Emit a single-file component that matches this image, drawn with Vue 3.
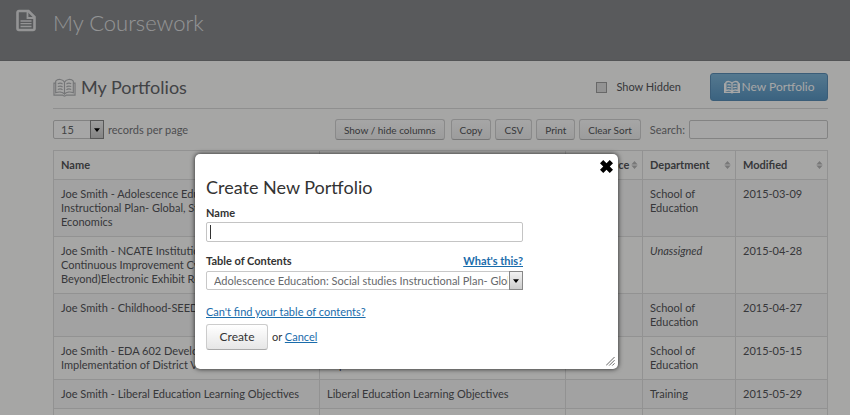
<script setup>
import { ref, onMounted } from 'vue'

const rows = [
  { name: 'Joe Smith - Adolescence Education:\nInstructional Plan- Global, Studies\nEconomics', toc: '', dept: 'School of Education', date: '2015-03-09' },
  { name: 'Joe Smith - NCATE Institutional\nContinuous Improvement Cycle\nBeyond)Electronic Exhibit Room', toc: '', dept: 'Unassigned', date: '2015-04-28' },
  { name: 'Joe Smith - Childhood-SEED\n ', toc: '', dept: 'School of Education', date: '2015-04-27' },
  { name: 'Joe Smith - EDA 602 Development\nImplementation of District Vision', toc: '\nImplementation of District Vision', dept: 'School of Education', date: '2015-05-15' },
  { name: 'Joe Smith - Liberal Education Learning Objectives', toc: 'Liberal Education Learning Objectives', dept: 'Training', date: '2015-05-29' },
  { name: '', toc: '', dept: '', date: '' },
]
const headings = ['Name', '', 'Conference', 'Department', 'Modified']
const tools = ['Copy', 'CSV', 'Print', 'Clear Sort']

const portfolioName = ref('')
const nameInput = ref(null)
onMounted(() => nameInput.value.focus())
</script>

<template>
  <div class="page">
    <header class="banner">
      <svg class="doc-icon" viewBox="0 0 20 22" aria-hidden="true">
        <path d="M3 1.500h9.500l6 6v11.500a1.500 1.500 0 0 1-1.500 1.500H3A1.500 1.500 0 0 1 1.500 19V3A1.500 1.500 0 0 1 3 1.500z" fill="none" stroke="currentColor" stroke-width="2.600" />
        <path d="M11.500 2.500v6h6.500" fill="none" stroke="currentColor" stroke-width="1.800" />
        <path d="M4.500 11.500h11M4.500 14.200h11M4.500 17h11" stroke="currentColor" stroke-width="1.300" />
      </svg>
      <h1>My Coursework</h1>
    </header>

    <main class="content">
      <div class="title-row">
        <svg class="book" viewBox="0 0 24 19" aria-hidden="true">
          <path d="M12 4C10.500 .5 5 .2 2.800 2.800V5H1v12.500h9q2 1.800 4 0h9V5h-1.800V2.800C19 .2 13.500 .5 12 4zM12 4V16.500M2.800 5v10c3-1.200 7.200-1 9.200 1.500 2-2.500 6.200-2.700 9.200-1.500V5M5 5.500c2-.8 3.800-.6 5 .5M5 8.500c2-.8 3.800-.6 5 .5M5 11.500c2-.8 3.800-.6 5 .5M19 5.500c-2-.8-3.800-.6-5 .5M19 8.500c-2-.8-3.800-.6-5 .5M19 11.500c-2-.8-3.800-.6-5 .5" />
        </svg>
        <h2>My Portfolios</h2>
        <label class="hidden-toggle"><input type="checkbox" />Show Hidden</label>
        <button class="new-btn" type="button">
          <svg class="book small" viewBox="0 0 24 19" aria-hidden="true">
            <path d="M12 4C10.500 .8 5 .5 2.800 2.800V5H1v12.500h9q2 1.500 4 0h9V5h-1.800V2.800C19 .5 13.500 .8 12 4zM12 4V16.500M2.800 5v10c3-1.200 7.200-1 9.200 1.500 2-2.500 6.200-2.700 9.200-1.500V5M5 6.500c2-.8 3.800-.6 5 .5M5 10.500c2-.8 3.800-.6 5 .5M19 6.500c-2-.8-3.800-.6-5 .5M19 10.500c-2-.8-3.800-.6-5 .5" />
          </svg>
          New Portfolio
        </button>
      </div>

      <div class="toolbar">
        <label class="records">
          <span class="picker">
            <select><option>15</option></select>
            <span class="drop"><svg viewBox="0 0 8 5" aria-hidden="true"><path d="M0 0h8L4 5z" /></svg></span>
          </span>
          records per page
        </label>
        <button class="tool columns" type="button">Show / hide columns</button>
        <button v-for="t in tools" :key="t" class="tool" type="button">{{ t }}</button>
        <label class="search">Search:<input type="text" /></label>
      </div>

      <table>
        <colgroup>
          <col class="c-name" /><col /><col class="c-aud" /><col class="c-dept" /><col class="c-date" />
        </colgroup>
        <thead>
          <tr>
            <th v-for="h in headings" :key="h">
              <span class="head">{{ h }}
                <svg viewBox="0 0 7 9" aria-hidden="true"><path d="M3.500 0L7 4H0zM0 5h7L3.500 9z" /></svg>
              </span>
            </th>
          </tr>
        </thead>
        <tbody>
          <tr v-for="(r, i) in rows" :key="i">
            <td>{{ r.name }}</td>
            <td>{{ r.toc }}</td>
            <td></td>
            <td :class="{ none: r.dept === 'Unassigned' }">{{ r.dept }}</td>
            <td>{{ r.date }}</td>
          </tr>
        </tbody>
      </table>
    </main>

    <div class="shade"></div>

    <form class="dialog" role="dialog" aria-labelledby="dlg-title" @submit.prevent>
      <button class="close" type="button" aria-label="Close">
        <svg viewBox="0 0 12 12"><path d="M3 0l3 3 3-3 3 3-3 3 3 3-3 3-3-3-3 3-3-3 3-3-3-3z" /></svg>
      </button>
      <h3 id="dlg-title">Create New Portfolio</h3>
      <div class="fields">
        <label class="field-label" for="pname">Name</label>
        <input id="pname" ref="nameInput" v-model="portfolioName" class="text" type="text" />
        <div class="label-row">
          <label class="field-label" for="toc">Table of Contents</label>
          <a class="bold" href="#">What's this?</a>
        </div>
        <span class="picker wide">
          <select id="toc"><option>Adolescence Education: Social studies Instructional Plan- Global</option></select>
          <span class="drop"><svg viewBox="0 0 8 5" aria-hidden="true"><path d="M0 0h8L4 5z" /></svg></span>
        </span>
      </div>
      <a class="find" href="#">Can't find your table of contents?</a>
      <div class="actions">
        <button class="create" type="submit">Create</button>
        <span>or <a href="#">Cancel</a></span>
      </div>
      <svg class="grip" viewBox="0 0 10 10" aria-hidden="true"><path d="M0 9.500L9.500 0M3.500 9.500l6-6M7 9.500L9.500 7" /></svg>
    </form>
  </div>
</template>

<style>
body {
  background: #a6a6a5;
  overflow: hidden;
}
</style>

<style scoped>
* {
  box-sizing: border-box;
}
.page {
  position: relative;
  height: 100vh;
  overflow: hidden;
  background: #fffffe;
  color: #55565a;
  font: 11px/14px Lato, sans-serif;
}
h1,
h2,
h3 {
  margin: 0;
  font-weight: 400;
}
button,
input,
select {
  font: inherit;
  color: inherit;
}
a {
  color: #1a6cab;
  text-decoration: underline;
}
.banner {
  display: flex;
  gap: 17px;
  height: 61px;
  padding: 9px 16px;
  background: #898b8e;
  border-bottom: 1px solid #808285;
  color: #e3e4e5;
}
.doc-icon {
  width: 20px;
  height: 23px;
}
h1 {
  font-size: 22px;
  line-height: 28px;
  font-weight: 300;
}
.content {
  padding: 0 22px 0 53px;
}
.title-row {
  display: flex;
  align-items: center;
  height: 48px;
  padding-top: 5px;
  border-bottom: 1px solid #dcdcdc;
}
.book {
  width: 23px;
  height: 19px;
  margin-right: 5px;
  fill: none;
  stroke: #b4b6b8;
  stroke-width: 1.2;
}
.book.small {
  width: 16px;
  height: 14px;
  margin-right: 2px;
  stroke: #fff;
  stroke-width: 2;
}
h2 {
  flex: 1;
  font-size: 18px;
  line-height: 24px;
  color: #66676b;
}
.hidden-toggle {
  display: flex;
  align-items: center;
  gap: 9px;
  margin-right: 29px;
}
.hidden-toggle input {
  appearance: none;
  width: 11px;
  height: 11px;
  margin: 0;
  border: 1px solid #a0a0a0;
  background: #e2e2e2;
}
.new-btn {
  display: flex;
  align-items: center;
  justify-content: center;
  width: 118px;
  height: 28px;
  padding: 0;
  border: 1px solid #5b8fb8;
  border-radius: 3px;
  background: linear-gradient(#82b9dc, #5b98c5);
  color: #fff;
  font-size: 12px;
}
.toolbar {
  display: flex;
  align-items: center;
  gap: 4px;
  height: 41px;
  color: #77787b;
}
.records {
  display: flex;
  flex: 1;
  align-items: center;
  gap: 4px;
}
.picker {
  position: relative;
  display: block;
  width: 51px;
  height: 19px;
}
.picker select {
  display: block;
  appearance: none;
  width: 100%;
  height: 100%;
  padding: 0 14px 0 7px;
  border: 1px solid #c8c8c8;
  border-radius: 2px;
  background: #fff;
  color: #66686b;
}
.drop {
  position: absolute;
  top: 0;
  right: 0;
  display: flex;
  align-items: center;
  justify-content: center;
  width: 14px;
  height: 19px;
  border: 1px solid #888;
  background: linear-gradient(#f2f2f2, #ccc);
  pointer-events: none;
}
.drop svg {
  width: 6px;
  height: 4px;
  fill: #000;
}
.tool {
  height: 21px;
  padding: 0 8px;
  border: 1px solid #d4d4d4;
  border-bottom-color: #b8b8b8;
  border-radius: 3px;
  background: linear-gradient(#fff, #f0f0f0);
  color: #55565a;
  font-size: 10px;
}
.tool.columns {
  margin-right: 2px;
}
.search {
  display: flex;
  align-items: center;
  gap: 4px;
  margin-left: 5px;
}
.search input {
  width: 139px;
  height: 19px;
  border: 1px solid #cacaca;
  border-radius: 2px;
  background: #fff;
}
table {
  width: 100%;
  table-layout: fixed;
  border-collapse: collapse;
}
.c-name {
  width: 266px;
}
.c-aud {
  width: 77px;
}
.c-dept {
  width: 93px;
}
.c-date {
  width: 92px;
}
th,
td {
  height: 29px;
  padding: 7px;
  border: 1px solid #e0e0e0;
  text-align: left;
  vertical-align: top;
  white-space: pre-line;
}
th {
  font-weight: 700;
}
tbody tr:nth-child(odd) {
  background: #f9f9f9;
}
.head {
  display: flex;
  align-items: center;
  justify-content: space-between;
  margin-right: -3px;
}
.head svg {
  flex: none;
  width: 7px;
  height: 8px;
  fill: #b9b9b9;
}
.none {
  font-style: italic;
}
.shade {
  position: absolute;
  inset: 0;
  background: rgba(0, 0, 0, 0.35);
}
.dialog {
  position: absolute;
  top: 154px;
  left: 195px;
  width: 423px;
  max-width: calc(100% - 195px);
  padding: 21px 11px 19px;
  border-radius: 5px;
  background: #fff;
  box-shadow: 0 0 5px rgba(0, 0, 0, 0.8);
  color: #333;
}
.close {
  position: absolute;
  top: 6px;
  right: 5px;
  width: 13px;
  height: 13px;
  padding: 0;
  border: 0;
  background: none;
}
.close svg {
  display: block;
  fill: #000;
}
h3 {
  margin-bottom: 7px;
  font-size: 18px;
  line-height: 24px;
}
.fields {
  width: 317px;
  max-width: 100%;
}
.field-label,
.bold {
  font-weight: 700;
}
.field-label {
  display: block;
}
.text {
  display: block;
  width: 100%;
  height: 20px;
  margin: 2px 0 12px;
  padding: 0 3px;
  border: 1px solid #c4c4c4;
  border-radius: 2px;
  outline: 0;
  caret-color: transparent;
}
.text:focus {
  background: linear-gradient(#333, #333) 3px center / 1px 14px no-repeat #fff;
}
.label-row {
  display: flex;
  justify-content: space-between;
  margin-bottom: 3px;
}
.picker.wide {
  width: 100%;
}
.find {
  display: block;
  width: max-content;
  margin: 15px 0 5px;
}
.actions {
  display: flex;
  align-items: center;
  gap: 4px;
}
.create {
  width: 62px;
  height: 26px;
  padding: 0;
  border: 1px solid #ccc;
  border-bottom-color: #aaa;
  border-radius: 3px;
  background: linear-gradient(#fff, #e6e6e6);
  font-size: 12px;
}
.grip {
  position: absolute;
  right: 3px;
  bottom: 3px;
  width: 9px;
  height: 9px;
  fill: none;
  stroke: #555;
}
</style>
